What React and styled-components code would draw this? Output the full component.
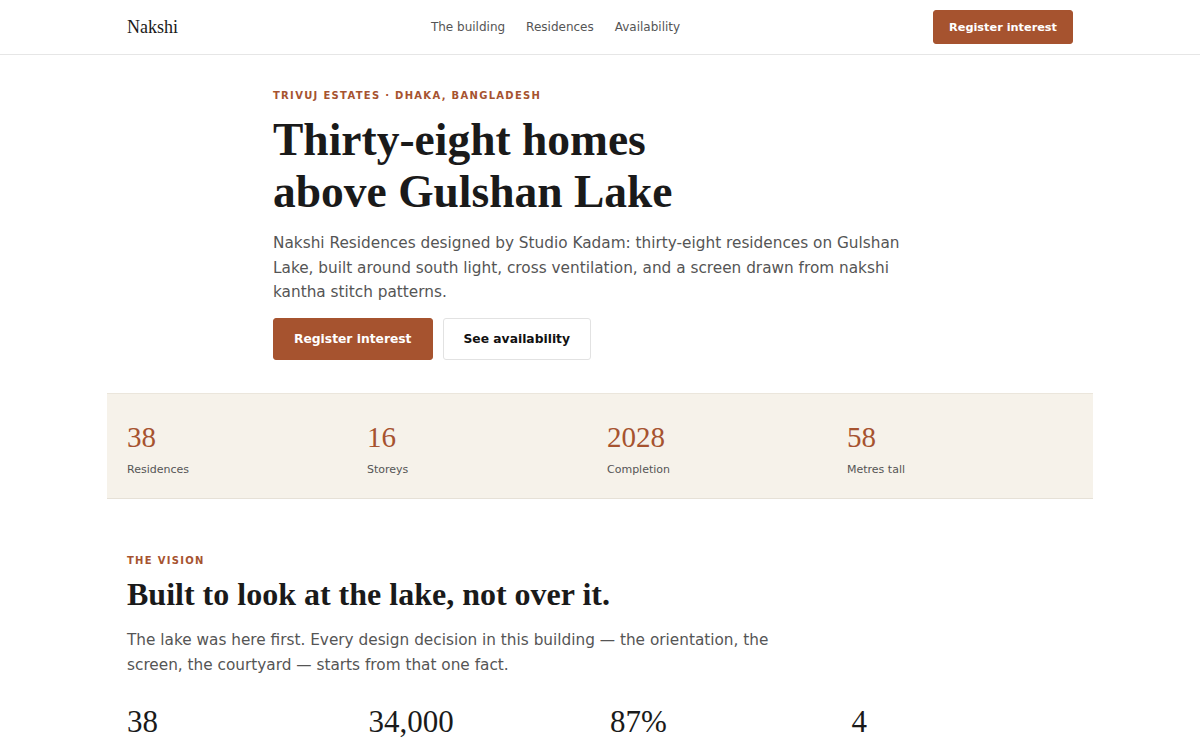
import React from 'react'
import styled, { createGlobalStyle } from 'styled-components'

const GlobalStyle = createGlobalStyle`
    * { box-sizing: border-box; }
    body {
        margin: 0;
        background: #ffffff;
        font-family: "DejaVu Sans", sans-serif;
        color: #1a1a1a;
    }
`

const accent = '#a6532f'
const serif = '"Liberation Serif", "Times New Roman", serif'

const Header = styled.header`
    height: 55px;
    border-bottom: 1px solid #e6e6e6;
`
const HeaderInner = styled.div`
    max-width: 986px;
    height: 100%;
    margin: 0 auto;
    padding: 0 20px;
    display: flex;
    align-items: center;
    justify-content: space-between;
`
const Logo = styled.div`
    font-family: ${serif};
    font-size: 18px;
    color: #1a1a1a;
`
const Nav = styled.nav`
    display: flex;
    gap: 21px;
`
const NavLink = styled.a`
    font-size: 12px;
    color: #555;
    text-decoration: none;
`
const Button = styled.a`
    display: inline-flex;
    align-items: center;
    justify-content: center;
    height: ${p => p.$small ? '34px' : '42px'};
    padding: 0 ${p => p.$small ? '15px' : '20px'};
    font-size: ${p => p.$small ? '11.3px' : '12.3px'};
    font-weight: bold;
    border-radius: 3px;
    text-decoration: none;
    background: ${p => p.$ghost ? '#fff' : accent};
    color: ${p => p.$ghost ? '#111' : '#fff'};
    border: 1px solid ${p => p.$ghost ? '#e2e2e2' : accent};
`

const Hero = styled.section`
    max-width: 654px;
    margin: 0 auto;
    padding: 33px 0 33px;
`
const Eyebrow = styled.div`
    font-size: 10px;
    line-height: 16px;
    font-weight: bold;
    letter-spacing: 0.13em;
    text-transform: uppercase;
    color: ${accent};
`
const Title = styled.h1`
    font-family: ${serif};
    font-size: 45.5px;
    line-height: 52px;
    font-weight: bold;
    margin: 10px 0 13px;
    color: #1a1a1a;
`
const Lead = styled.p`
    font-size: 15.3px;
    line-height: 24.5px;
    color: #555;
    margin: 0 0 13px;
`
const Actions = styled.div`
    display: flex;
    gap: 10px;
`

const Band = styled.section`
    max-width: 986px;
    margin: 0 auto;
    background: #f6f2ea;
    border-top: 1px solid #ebe6dc;
    border-bottom: 1px solid #e6e1d7;
    padding: 26px 20px 20px;
`
const StatGrid = styled.div`
    display: grid;
    grid-template-columns: repeat(4, ${p => p.$col || '240px'});
`
const StatNumber = styled.div`
    font-family: ${serif};
    font-size: ${p => p.$size || '29px'};
    line-height: 1.2;
    color: ${p => p.$color || accent};
`
const StatLabel = styled.div`
    font-size: 11px;
    line-height: 16px;
    color: #555;
    margin-top: 8px;
`

const Section = styled.section`
    max-width: 986px;
    margin: 0 auto;
    padding: 54px 20px 0;
`
const SectionTitle = styled.h2`
    font-family: ${serif};
    font-size: 32px;
    line-height: 40px;
    font-weight: bold;
    margin: 5px 0 14px;
    color: #1a1a1a;
`
const SectionText = styled.p`
    max-width: 660px;
    font-size: 15.3px;
    line-height: 24.5px;
    color: #555;
    margin: 0 0 26px;
`

const bandStats = [
    ['38', 'Residences'],
    ['16', 'Storeys'],
    ['2028', 'Completion'],
    ['58', 'Metres tall'],
]

const visionStats = [
    ['38', 'Private homes'],
    ['34,000', 'sq ft of courtyard'],
    ['87%', 'Homes facing lake'],
    ['4', 'Minutes to Gulshan Circle'],
]

export default function App() {
    return (
        <>
            <GlobalStyle />
            <Header>
                <HeaderInner>
                    <Logo>Nakshi</Logo>
                    <Nav>
                        <NavLink href="#">The building</NavLink>
                        <NavLink href="#">Residences</NavLink>
                        <NavLink href="#">Availability</NavLink>
                    </Nav>
                    <Button $small href="#">Register interest</Button>
                </HeaderInner>
            </Header>

            <Hero>
                <Eyebrow>Trivuj Estates · Dhaka, Bangladesh</Eyebrow>
                <Title>Thirty-eight homes<br />above Gulshan Lake</Title>
                <Lead>
                    Nakshi Residences designed by Studio Kadam: thirty-eight residences on Gulshan
                    Lake, built around south light, cross ventilation, and a screen drawn from nakshi
                    kantha stitch patterns.
                </Lead>
                <Actions>
                    <Button href="#">Register interest</Button>
                    <Button $ghost href="#">See availability</Button>
                </Actions>
            </Hero>

            <Band>
                <StatGrid>
                    {bandStats.map(([n, l]) => (
                        <div key={l}>
                            <StatNumber>{n}</StatNumber>
                            <StatLabel>{l}</StatLabel>
                        </div>
                    ))}
                </StatGrid>
            </Band>

            <Section>
                <Eyebrow>The vision</Eyebrow>
                <SectionTitle>Built to look at the lake, not over it.</SectionTitle>
                <SectionText>
                    The lake was here first. Every design decision in this building — the orientation, the
                    screen, the courtyard — starts from that one fact.
                </SectionText>
                <StatGrid $col="241.5px">
                    {visionStats.map(([n, l]) => (
                        <div key={l}>
                            <StatNumber $size="31px" $color="#1a1a1a">{n}</StatNumber>
                            <StatLabel>{l}</StatLabel>
                        </div>
                    ))}
                </StatGrid>
            </Section>
        </>
    )
}
